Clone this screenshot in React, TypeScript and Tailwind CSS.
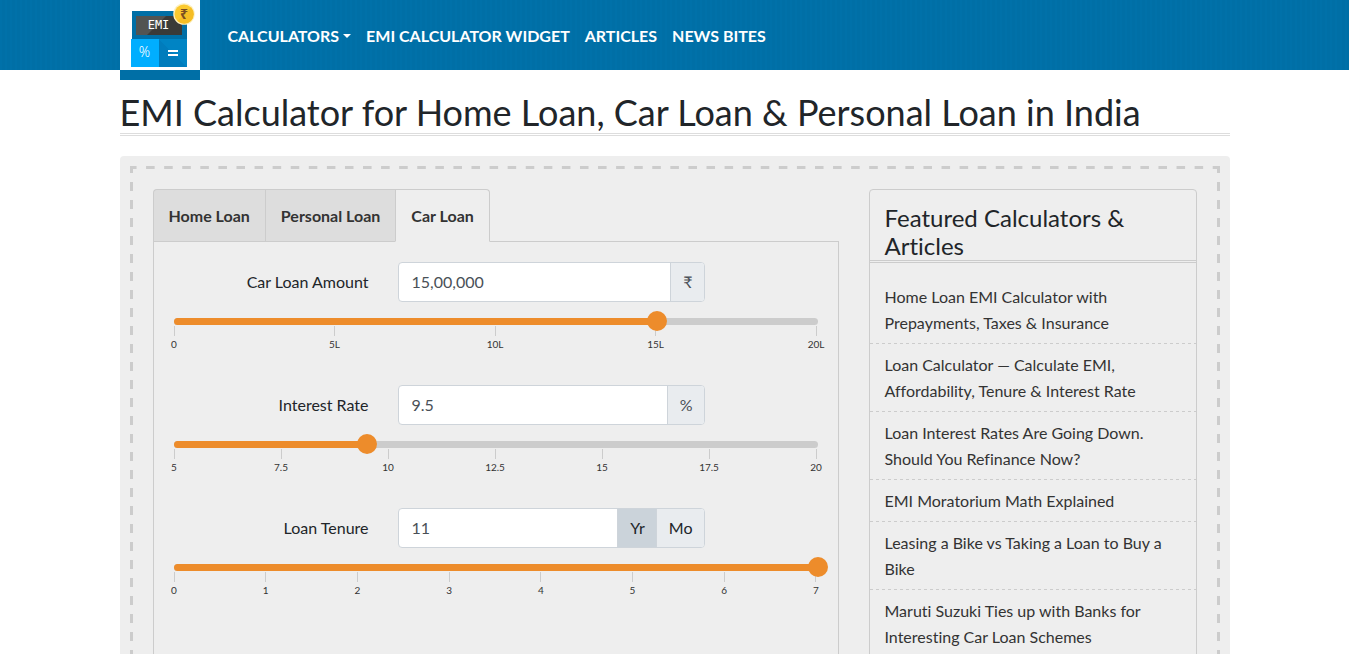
import { useState } from "react";

const font = "font-['Lato','Noto_Sans',sans-serif]";

const articles = [
  "Home Loan EMI Calculator with Prepayments, Taxes & Insurance",
  "Loan Calculator — Calculate EMI, Affordability, Tenure & Interest Rate",
  "Loan Interest Rates Are Going Down. Should You Refinance Now?",
  "EMI Moratorium Math Explained",
  "Leasing a Bike vs Taking a Loan to Buy a Bike",
  "Maruti Suzuki Ties up with Banks for Interesting Car Loan Schemes",
];

function Logo() {
  return (
    <svg width="80" height="70" viewBox="0 0 80 70" aria-hidden="true">
      <rect width="80" height="70" fill="#fff" />
      <rect x="12" y="11" width="55" height="29" fill="#006fa6" />
      <rect x="16" y="16" width="46" height="19" fill="#3a3a38" />
      <path d="M16 16H46L27 35H16Z" fill="#525452" />
      <rect x="11" y="39" width="28" height="28" fill="#00aeff" />
      <rect x="39" y="39" width="28" height="28" fill="#0086cc" />
      <path d="M39 39L67 67H39Z" fill="#007cbc" />
      <path d="M39 39L67 67V39Z" fill="#0084c4" />
      <text x="38.5" y="29" fill="#fff" fontSize="12" textAnchor="middle" fontFamily="DejaVu Sans Mono">EMI</text>
      <text x="24.500" y="57" fill="#fff" fontSize="14" textAnchor="middle" fontFamily="Noto Sans" fontWeight="300">%</text>
      <path d="M48 51H58M48 55H58" stroke="#fff" strokeWidth="2" />
      <circle cx="64" cy="14" r="10.800" fill="#fdf0c0" />
      <circle cx="64" cy="14" r="9.500" fill="#fbc92f" />
      <path d="M71 7.500A9.500 9.500 0 0 1 57.500 21Z" fill="#f5bd25" />
      <text x="64" y="19" fill="#7a4c22" fontSize="14" fontWeight="700" textAnchor="middle" fontFamily="Noto Sans">₹</text>
    </svg>
  );
}

type SliderProps = { label: string; min: number; max: number; step: number; value: number; marks: string[]; onChange: (v: number) => void };

function Slider({ label, min, max, step, value, marks, onChange }: SliderProps) {
  const shown = Math.min(max, Math.max(min, value));
  return (
    <div className="mt-4">
      <div className="relative h-[7px] rounded-full bg-[#ccc]">
        <div className="h-full rounded-full bg-[#ed8c2b]" style={{ width: `${((shown - min) / (max - min)) * 100}%` }} />
        <input
          type="range"
          aria-label={label}
          min={min}
          max={max}
          step={step}
          value={shown}
          onChange={(e) => onChange(Number(e.target.value))}
          className="absolute -inset-x-2.5 -top-[7px] m-0 h-5 w-[calc(100%+20px)] cursor-pointer appearance-none bg-transparent [&::-webkit-slider-thumb]:size-5 [&::-webkit-slider-thumb]:appearance-none [&::-webkit-slider-thumb]:rounded-full [&::-webkit-slider-thumb]:bg-[#ed8c2b]"
        />
      </div>
      <div className="mt-px mr-px flex justify-between">
        {marks.map((m) => (
          <div key={m} className="flex w-px flex-col items-center">
            <span className="h-2.5 w-px bg-[#ccc]" />
            <span className="mt-0.5 text-[10px] leading-3 whitespace-nowrap text-[#333]">{m}</span>
          </div>
        ))}
      </div>
    </div>
  );
}

const rowClass = "flex flex-wrap items-center gap-x-[29px]";
const labelClass = "w-[195px] text-right";
const groupClass = "flex h-10 w-[307px] overflow-hidden rounded border border-[#ced4da] bg-white";
const inputClass = "min-w-0 flex-1 pr-3 pl-[13px] text-[#495057] outline-none";
const addonClass = "flex items-center border-l border-[#ced4da] bg-[#e9ecef] pr-[11px] pl-3 text-[#495057]";

export default function App() {
  const [tab, setTab] = useState("Car Loan");
  const [amount, setAmount] = useState(1500000);
  const [rate, setRate] = useState(9.5);
  const [tenure, setTenure] = useState(11);
  const [unit, setUnit] = useState("Yr");
  const num = (s: string) => Number(s.replace(/[^\d.]/g, "")) || 0;

  return (
    <div className={`h-screen overflow-y-auto bg-white pr-[17px] text-base text-[#212529] [font-variant-ligatures:none] [scrollbar-width:none] ${font}`}>
      <header className="h-[70px] bg-[#006fa6] bg-[repeating-linear-gradient(90deg,#0071a9_0_2px,#006fa6_2px_5px)]">
        <div className="mx-auto flex max-w-[1110px] items-start">
          <a href="#home" aria-label="EMI Calculator" className="block h-20 w-20 shrink-0 bg-[#006fa6]">
            <Logo />
          </a>
          <nav className="ml-7 flex h-[72px] items-center gap-[15px] font-bold text-white">
            <a href="#calculators" className="flex items-center gap-1">
              CALCULATORS
              <span className="border-x-4 border-t-4 border-x-transparent border-t-white" />
            </a>
            <a href="#widget">EMI CALCULATOR WIDGET</a>
            <a href="#articles">ARTICLES</a>
            <a href="#news">NEWS BITES</a>
          </nav>
        </div>
      </header>

      <main className="mx-auto max-w-[1110px]">
        <h1 className="mt-[22px] border-b-3 border-double border-[#ddd] pb-px text-[36px] leading-10">
          EMI Calculator for Home Loan, Car Loan &amp; Personal Loan in India
        </h1>

        <div className="mt-5 rounded bg-[#eee] p-2.5">
          <div className="bg-[linear-gradient(90deg,#ccc_50%,transparent_50%),linear-gradient(#ccc_50%,transparent_50%),linear-gradient(#ccc_50%,transparent_50%)] bg-[length:calc((100%_-_5px)/60)_3px,3px_18px,3px_18px] bg-[position:-2px_0,0_-2px,100%_-2px] [background-repeat:repeat-x,repeat-y,repeat-y] p-[23px]">
            <div className="flex flex-col gap-[30px] lg:flex-row">
              <section className="flex min-w-0 flex-1 flex-col">
                <div role="tablist" className="relative flex">
                  {["Home Loan", "Personal Loan", "Car Loan"].map((t) => (
                    <button
                      key={t}
                      role="tab"
                      aria-selected={t === tab}
                      onClick={() => setTab(t)}
                      className={`h-[53px] border-y border-l border-[#ccc] px-[15px] font-bold text-[#333] first:rounded-tl last:rounded-tr last:border-r ${t === tab ? "border-b-[#eee] bg-[#eee]" : "bg-[#ddd]"}`}
                    >
                      {t}
                    </button>
                  ))}
                </div>
                <form className="-mt-px flex-1 border border-[#ccc] p-5" onSubmit={(e) => e.preventDefault()}>
                  <div className={rowClass}>
                    <label htmlFor="amount" className={labelClass}>Car Loan Amount</label>
                    <div className={groupClass}>
                      <input id="amount" className={inputClass} value={amount.toLocaleString("en-IN")} onChange={(e) => setAmount(num(e.target.value))} />
                      <span className={addonClass}>₹</span>
                    </div>
                  </div>
                  <Slider label="Car Loan Amount slider" min={0} max={2000000} step={10000} value={amount} onChange={setAmount} marks={["0", "5L", "10L", "15L", "20L"]} />

                  <div className={`mt-[35px] ${rowClass}`}>
                    <label htmlFor="rate" className={labelClass}>Interest Rate</label>
                    <div className={groupClass}>
                      <input id="rate" className={inputClass} value={rate} onChange={(e) => setRate(num(e.target.value))} />
                      <span className={addonClass}>%</span>
                    </div>
                  </div>
                  <Slider label="Interest Rate slider" min={5} max={20} step={0.25} value={rate} onChange={setRate} marks={["5", "7.5", "10", "12.5", "15", "17.5", "20"]} />

                  <div className={`mt-[35px] ${rowClass}`}>
                    <label htmlFor="tenure" className={labelClass}>Loan Tenure</label>
                    <div className={groupClass}>
                      <input id="tenure" className={inputClass} value={tenure} onChange={(e) => setTenure(num(e.target.value))} />
                      {["Yr", "Mo"].map((u) => (
                        <button
                          key={u}
                          type="button"
                          aria-pressed={u === unit}
                          onClick={() => setUnit(u)}
                          className={`border-l border-[#ced4da] pr-[11px] pl-3 ${u === unit ? "bg-[#cbd3da]" : "bg-[#e9ecef]"}`}
                        >
                          {u}
                        </button>
                      ))}
                    </div>
                  </div>
                  <Slider label="Loan Tenure slider" min={0} max={7} step={0.5} value={tenure} onChange={setTenure} marks={["0", "1", "2", "3", "4", "5", "6", "7"]} />
                </form>
              </section>

              <aside className="rounded border border-[#ccc] pb-16 lg:w-[328px]">
                <h2 className="border-b-3 border-double border-[#ccc] px-[15px] pt-3.5 text-2xl leading-7">Featured Calculators &amp; Articles</h2>
                <ul className="mt-[13px]">
                  {articles.map((a) => (
                    <li
                      key={a}
                      className="bg-[linear-gradient(90deg,#ccc_50%,transparent_50%)] bg-[length:6px_1px] bg-bottom-left bg-repeat-x px-[15px] py-2 leading-[26px]"
                    >
                      <a href="#article" className="text-[#333]">{a}</a>
                    </li>
                  ))}
                </ul>
              </aside>
            </div>
          </div>
        </div>
      </main>
    </div>
  );
}
